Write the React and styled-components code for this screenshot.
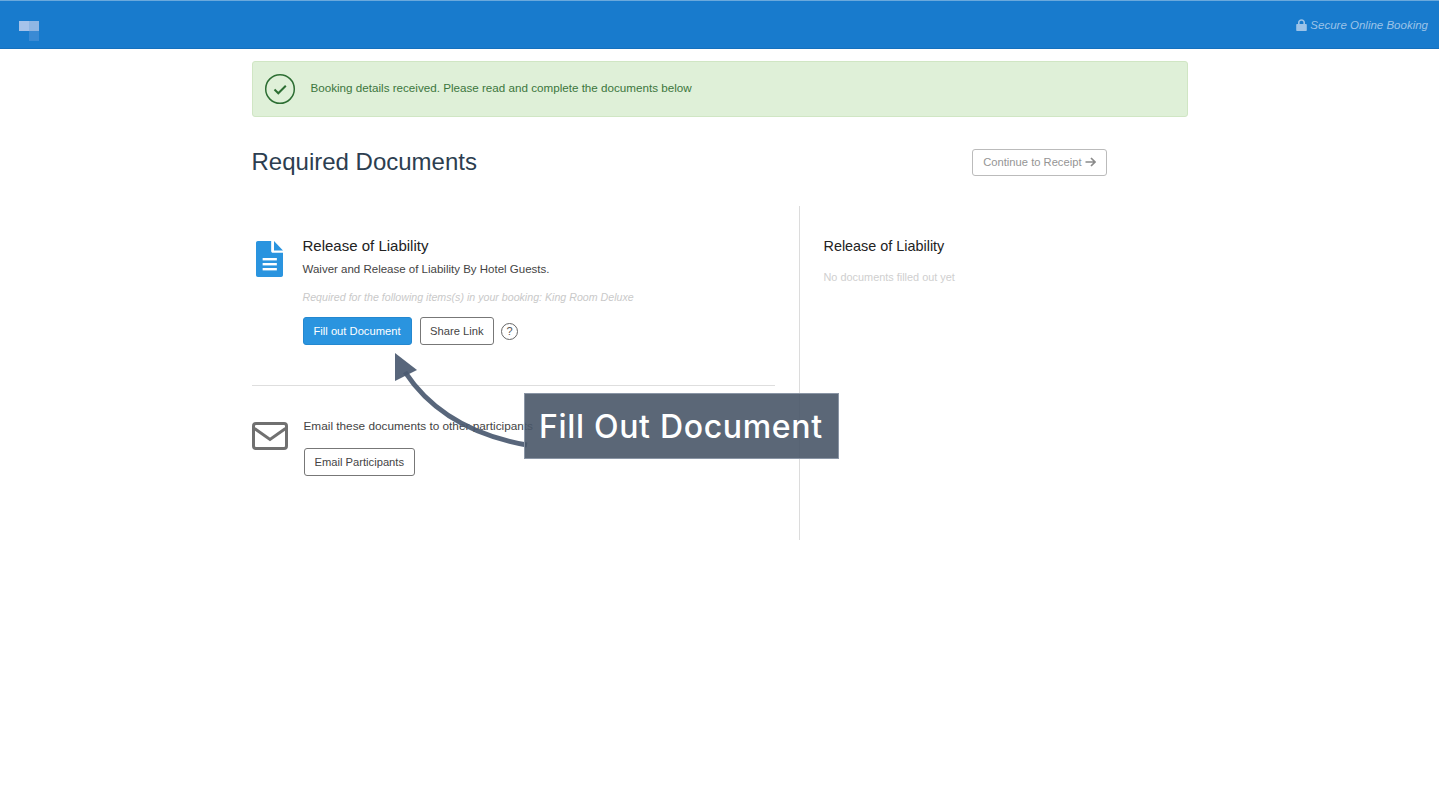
import React from "react";
import styled, { createGlobalStyle } from "styled-components";

const GlobalStyle = createGlobalStyle`
  html, body {
    margin: 0;
    padding: 0;
    background: #fff;
    font-family: "Liberation Sans", Arial, sans-serif;
    -webkit-font-smoothing: antialiased;
  }
  * {
    box-sizing: border-box;
  }
`;

const Page = styled.div`
  position: relative;
  width: 100%;
  min-height: 789px;
  overflow: hidden;
`;

const Header = styled.header`
  height: 49px;
  background: #187bcd;
  border-top: 1px solid #6aa9dc;
  border-bottom: 1px solid #1570bd;
  display: flex;
  align-items: center;
  justify-content: space-between;
  padding: 0 11px 0 19px;
`;

const Logo = styled.svg`
  width: 20px;
  height: 20px;
  margin-top: 12px;
`;

const Secure = styled.div`
  display: flex;
  align-items: center;
  gap: 3px;
  color: #9cc3e8;
  font-size: 11.5px;
  font-style: italic;
`;

const Main = styled.main`
  width: 936px;
  margin: 0 auto;
  padding-top: 12px;
`;

const Alert = styled.div`
  height: 56px;
  display: flex;
  align-items: center;
  gap: 15px;
  padding-left: 11px;
  background: #dff0d8;
  border: 1px solid #d0e6c4;
  border-radius: 3px;
  color: #3c763d;
  font-size: 11.65px;
`;

const AlertText = styled.span`
  margin-bottom: 3px;
`;

const TitleRow = styled.div`
  display: flex;
  align-items: center;
  justify-content: space-between;
  padding: 31px 81px 0 0;
`;

const Title = styled.h1`
  margin: 0;
  font-size: 24px;
  font-weight: 400;
  color: #2c3e50;
`;

const Button = styled.button`
  height: ${(p) => (p.$muted ? 27 : 28)}px;
  padding: 0 ${(p) => (p.$tight ? 9.5 : 10)}px;
  display: inline-flex;
  align-items: center;
  gap: 3px;
  font-family: inherit;
  font-size: 11.2px;
  background: ${(p) => (p.$primary ? "#2a94df" : "#fff")};
  color: ${(p) => (p.$primary ? "#fff" : p.$muted ? "#959595" : "#444")};
  border: 1px solid ${(p) => (p.$primary ? "#2488d0" : p.$muted ? "#bbb" : "#777")};
  border-radius: 3px;
`;

const Columns = styled.div`
  display: grid;
  grid-template-columns: 547px 1fr;
  margin-top: 30px;
  min-height: 334px;
`;

const LeftColumn = styled.div`
  padding: 32px 24px 0 0;
`;

const RightColumn = styled.aside`
  border-left: 1px solid #dcdcdc;
  padding: 32px 0 0 24px;
`;

const DocRow = styled.section`
  display: flex;
  gap: 20px;
  height: 148px;
  padding-left: 4px;
  border-bottom: 1px solid #dedede;
`;

const DocIcon = styled.svg`
  width: 27px;
  height: 36px;
  margin-top: 3px;
  flex: none;
`;

const DocName = styled.h2`
  margin: ${(p) => (p.$side ? 0 : "-1px 0 0")};
  font-size: ${(p) => (p.$side ? 14.4 : 15)}px;
  line-height: 17px;
  font-weight: 400;
  color: #222;
`;

const DocDesc = styled.p`
  margin: 8px 0 0;
  font-size: 11.5px;
  line-height: 14px;
  color: #444;
`;

const DocNote = styled.p`
  margin: 14px 0 0;
  font-size: 10.65px;
  line-height: 14px;
  font-style: italic;
  color: #c9c9c9;
`;

const Actions = styled.div`
  display: flex;
  align-items: center;
  gap: 8px;
  margin-top: 13px;
`;

const Help = styled.span`
  width: 17px;
  height: 17px;
  margin-left: -1px;
  border: 1px solid #666;
  border-radius: 50%;
  display: flex;
  align-items: center;
  justify-content: center;
  font-size: 11px;
  color: #555;
`;

const EmailRow = styled.section`
  display: flex;
  gap: 16px;
  padding-top: 33px;
`;

const MailIcon = styled.svg`
  width: 36px;
  height: 28px;
  margin-top: 3px;
  flex: none;
`;

const EmailText = styled.p`
  margin: 0 0 15px;
  font-size: 11.8px;
  line-height: 14px;
  color: #444;
`;

const SideEmpty = styled.p`
  margin: 15px 0 0;
  font-size: 10.9px;
  line-height: 14px;
  color: #cfcfcf;
`;

const ArrowOverlay = styled.svg`
  position: absolute;
  left: 385px;
  top: 345px;
  width: 150px;
  height: 110px;
`;

const Callout = styled.div`
  position: absolute;
  left: 524px;
  top: 393px;
  width: 315px;
  height: 66px;
  display: flex;
  align-items: center;
  padding-left: 14px;
  background: rgba(73, 86, 104, 0.9);
  border: 1px solid #8a95a5;
  color: #fff;
  font-family: Inter, "Open Sans", sans-serif;
  font-size: 32px;
  font-weight: 500;
  letter-spacing: 0.68px;
  white-space: nowrap;
`;

const LockIcon = () => (
  <svg width="11" height="12" viewBox="0 0 11 12">
    <path
      fill="#9cc3e8"
      d="M2 5V3.600C2 1.600 3.500.3 5.500.3S9 1.600 9 3.600V5h.8c.6 0 1 .4 1 1v5c0 .6-.4 1-1 1H1.200c-.6 0-1-.4-1-1V6c0-.6.4-1 1-1H2zm1.600 0h3.800V3.600c0-1.100-.8-1.800-1.900-1.800s-1.900.7-1.900 1.800V5z"
    />
  </svg>
);

const CheckCircle = () => (
  <svg width="32" height="32" viewBox="0 0 32 32" fill="none">
    <circle cx="16" cy="16" r="14.300" stroke="#2d6e33" strokeWidth="1.500" />
    <path d="M10.500 16.500l3.800 3.800 7.500-7.600" stroke="#2d6e33" strokeWidth="2" />
  </svg>
);

const ArrowRight = () => (
  <svg width="11" height="10" viewBox="0 0 11 10" fill="none">
    <path d="M.5 5h9M6 1l4 4-4 4" stroke="#8a8a8a" strokeWidth="1.700" />
  </svg>
);

export default function App() {
  return (
    <Page>
      <GlobalStyle />
      <Header>
        <Logo viewBox="0 0 20 20">
          <rect x="0" y="0" width="10" height="10" fill="#a6c3ea" />
          <rect x="10" y="0" width="10" height="10" fill="#8fb6e3" />
          <rect x="10" y="10" width="10" height="10" fill="#3a8ad4" />
        </Logo>
        <Secure>
          <LockIcon />
          Secure Online Booking
        </Secure>
      </Header>
      <Main>
        <Alert>
          <CheckCircle />
          <AlertText>
            Booking details received. Please read and complete the documents below
          </AlertText>
        </Alert>
        <TitleRow>
          <Title>Required Documents</Title>
          <Button $muted>
            Continue to Receipt <ArrowRight />
          </Button>
        </TitleRow>
        <Columns>
          <LeftColumn>
            <DocRow>
              <DocIcon viewBox="1 1 28.500 36" preserveAspectRatio="none">
                <path
                  fill="#2a94df"
                  d="M3 1h14v10c0 1 .8 1.800 1.800 1.800H29.500V35c0 1.200-.8 2-2 2H3c-1.200 0-2-.8-2-2V3c0-1.200.8-2 2-2z"
                />
                <path fill="#2a94df" d="M20 1l9.500 9.500H20z" />
                <rect x="8" y="18" width="15" height="2.400" fill="#fff" />
                <rect x="8" y="23" width="15" height="2.400" fill="#fff" />
                <rect x="8" y="28" width="15" height="2.400" fill="#fff" />
              </DocIcon>
              <div>
                <DocName>Release of Liability</DocName>
                <DocDesc>Waiver and Release of Liability By Hotel Guests.</DocDesc>
                <DocNote>
                  Required for the following items(s) in your booking: King Room Deluxe
                </DocNote>
                <Actions>
                  <Button $primary>Fill out Document</Button>
                  <Button $tight>Share Link</Button>
                  <Help>?</Help>
                </Actions>
              </div>
            </DocRow>
            <EmailRow>
              <MailIcon viewBox="0 0 36 28" fill="none">
                <rect x="1.500" y="1.500" width="33" height="25" rx="2.500" stroke="#707070" strokeWidth="3" />
                <path d="M2.500 6.500L18 17.500 33.500 6.500" stroke="#707070" strokeWidth="3" />
              </MailIcon>
              <div>
                <EmailText>Email these documents to other participants</EmailText>
                <Button>Email Participants</Button>
              </div>
            </EmailRow>
          </LeftColumn>
          <RightColumn>
            <DocName $side>Release of Liability</DocName>
            <SideEmpty>No documents filled out yet</SideEmpty>
          </RightColumn>
        </Columns>
      </Main>
      <ArrowOverlay viewBox="0 0 150 110" fill="none">
        <path d="M20 27C45 65 85 90 142 100" stroke="#4b5a71" strokeWidth="5" strokeOpacity="0.93" />
        <path d="M10 8L32 25 10 36z" fill="#4b5a71" fillOpacity="0.93" />
      </ArrowOverlay>
      <Callout>Fill Out Document</Callout>
    </Page>
  );
}
